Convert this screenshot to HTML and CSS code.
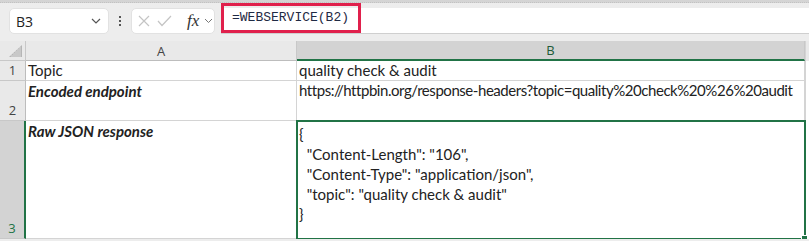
FILE: index.html
```html
<!DOCTYPE html>
<html lang="en">
<head>
  <meta charset="UTF-8">
  <title>WEBSERVICE</title>
  <link rel="stylesheet" href="styles.css">
</head>
<body>

  <div class="topbar"></div>

  <div class="formula-bar">
    <div class="name-box">
      <span>B3</span>
      <svg width="10" height="6" viewBox="0 0 10 6"><polyline points="1,1 5,5 9,1" fill="none" stroke="#555" stroke-width="1.2"/></svg>
    </div>
    <div class="dots"><i></i><i></i><i></i></div>
    <div class="fx-box">
      <svg width="12" height="12" viewBox="0 0 12 12"><path d="M1 1 L11 11 M11 1 L1 11" stroke="#c4c4c4" stroke-width="1.2"/></svg>
      <svg width="15" height="12" viewBox="0 0 15 12"><polyline points="1,6 5,10.5 14,1" fill="none" stroke="#c4c4c4" stroke-width="1.2"/></svg>
      <span class="fx">fx</span>
      <svg width="9" height="6" viewBox="0 0 9 6"><polyline points="1,1 4.5,4.5 8,1" fill="none" stroke="#777" stroke-width="1"/></svg>
    </div>
    <div class="formula">
      <span class="formula-text">=WEBSERVICE(B2)</span>
    </div>
  </div>

  <div class="sheet">
    <div class="corner"><svg width="14" height="12" viewBox="0 0 14 12"><polygon points="13,0 13,12 0,12" fill="#b5b5b5"/><path d="M3 12V10 M5 12V8 M7 12V6 M9 12V4 M11 12V2" stroke="#e6e6e6" stroke-width="0.8"/></svg></div>
    <div class="col-head">A</div>
    <div class="col-head active">B</div>
    <div class="edge head-edge"></div>

    <div class="row-head">1</div>
    <div class="cell">Topic</div>
    <div class="cell">quality check &amp; audit</div>
    <div class="edge"></div>

    <div class="row-head tall">2</div>
    <div class="cell label">Encoded endpoint</div>
    <div class="cell url">https://httpbin.org/response-headers?topic=quality%20check%20%26%20audit</div>
    <div class="edge"></div>

    <div class="row-head tall active">3</div>
    <div class="cell label">Raw JSON response</div>
    <div class="cell json selected">{
  "Content-Length": "106",
  "Content-Type": "application/json",
  "topic": "quality check &amp; audit"
}</div>
    <div class="edge"></div>
  </div>

</body>
</html>
```

FILE: styles.css
```css
body {
  margin: 0;
  background-color: #ededed;
  font-family: Lato, "Open Sans", sans-serif;
  color: #222;
  overflow: hidden;
}

.topbar {
  height: 2px;
  background-color: #d4d4d4;
  border-bottom: 1px dotted #c2c2c2;
  margin-bottom: 5px;
}

/* formula bar */
.formula-bar {
  display: flex;
  align-items: stretch;
  height: 26px;
  padding-left: 9px;
}

.name-box {
  width: 100px;
  box-sizing: border-box;
  background-color: #fff;
  border: 1px solid #e2e2e2;
  border-radius: 5px;
  display: flex;
  align-items: center;
  justify-content: space-between;
  padding: 0 7px 0 6px;
  font-family: "Open Sans", sans-serif;
  font-size: 14px;
}

.dots {
  width: 22px;
  display: flex;
  flex-direction: column;
  align-items: center;
  justify-content: center;
  gap: 2px;
}

.dots i {
  width: 2px;
  height: 2px;
  background-color: #555;
}

.fx-box {
  width: 84px;
  box-sizing: border-box;
  background-color: #fff;
  border: 1px solid #e2e2e2;
  border-radius: 5px;
  display: flex;
  align-items: center;
  padding-left: 6px;
  gap: 7px;
}

.fx-box .fx {
  font-family: "Liberation Serif", serif;
  font-style: italic;
  font-size: 17px;
  color: #333;
  margin-left: 8px;
  margin-right: -2px;
}

.formula {
  flex: 1;
  margin-left: 6px;
  background-color: #fff;
  border-bottom: 1px solid #cfcfcf;
  position: relative;
}

.formula-text {
  position: absolute;
  left: 0;
  top: -5px;
  width: 140px;
  height: 30px;
  box-sizing: border-box;
  border: 3px solid #e0204c;
  padding: 4px 0 0 8px;
  font-family: "Liberation Mono", monospace;
  font-size: 13px;
  color: #1f2a44;
}

/* grid */
.sheet {
  margin-top: 7px;
  display: grid;
  grid-template-columns: 26px 271px 508px 1fr;
  grid-template-rows: 20px 20px 40px 118px;
  background-color: #fff;
}

.corner,
.col-head,
.row-head {
  background-color: #e9e9e9;
  color: #444;
  font-family: "Open Sans", sans-serif;
  font-size: 13px;
}

.corner {
  border-right: 1px solid #c8c8c8;
  border-bottom: 1px solid #c8c8c8;
  display: flex;
  align-items: flex-end;
  justify-content: flex-end;
  padding: 0 2px 3px 0;
}

.col-head {
  border-right: 1px solid #c8c8c8;
  border-bottom: 1px solid #bdbdbd;
  text-align: center;
  line-height: 20px;
}

.col-head.active {
  background-color: #d3d3d3;
  color: #215a38;
  border-bottom: 2px solid #217346;
  line-height: 18px;
}

.row-head {
  border-right: 1px solid #bdbdbd;
  border-bottom: 1px solid #c8c8c8;
  display: flex;
  align-items: flex-end;
  justify-content: center;
  padding-bottom: 1px;
  line-height: 18px;
}

.row-head.active {
  background-color: #d3d3d3;
  color: #217346;
  border-right: 2px solid #217346;
}

.cell {
  border-right: 1px solid #d4d4d4;
  border-bottom: 1px solid #d4d4d4;
  font-size: 15px;
  line-height: 19px;
  padding-left: 2px;
  white-space: nowrap;
  overflow: hidden;
}

.cell.url {
  letter-spacing: -0.45px;
}

.cell.label {
  font-weight: bold;
  font-style: italic;
  line-height: 20px;
}

.cell.json {
  white-space: pre;
  line-height: 20px;
  padding-top: 3px;
}

.cell.selected {
  position: relative;
  outline: 2px solid #217346;
  outline-offset: -1px;
  overflow: visible;
}

.cell.selected::after {
  content: "";
  position: absolute;
  right: -4px;
  bottom: -4px;
  width: 5px;
  height: 5px;
  background-color: #217346;
  border: 1px solid #fff;
}

.edge {
  background-color: #fff;
  border-left: 1px solid #d4d4d4;
}

.head-edge {
  background-color: #e9e9e9;
}
```
